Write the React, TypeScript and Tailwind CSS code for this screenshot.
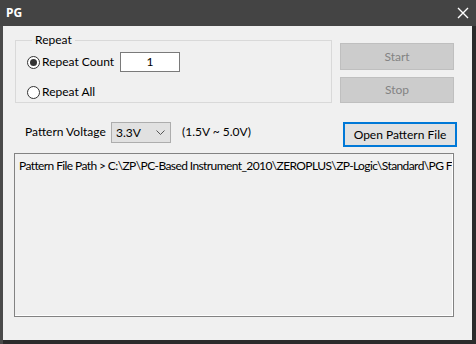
import React from "react";

const font = { fontFamily: 'Lato, "Noto Sans", sans-serif' };

function Radio({ checked, label }: { checked?: boolean; label: string }) {
  return (
    <div className="flex items-center h-[16px]">
      <div className="w-[13px] h-[13px] rounded-full border border-[#333333] bg-white flex items-center justify-center shrink-0">
        {checked && <div className="w-[7px] h-[7px] rounded-full bg-[#333333]" />}
      </div>
      <span className="ml-[2px] text-[12px] text-black leading-none whitespace-nowrap">{label}</span>
    </div>
  );
}

export default function App() {
  return (
    <div
      className="w-[476px] h-[344px] bg-[#2b2b2b] flex flex-col overflow-hidden"
      style={font}
    >
      <div className="h-[26px] bg-[#444444] flex items-center justify-between pl-[6px] pr-[7px] shrink-0">
        <span className="text-white text-[12px] font-bold" style={{ fontFamily: '"Noto Sans", sans-serif' }}>PG</span>
        <svg width="12" height="12" viewBox="0 0 12 12">
          <path d="M1 1 L11 11 M11 1 L1 11" stroke="white" strokeWidth="1.4" />
        </svg>
      </div>
      <div className="flex flex-1 min-h-0">
        <div className="w-[3px] bg-[#4a4a4a]" />
        <div className="flex-1 flex flex-col mr-[4px] mb-[4px] bg-[#f0f0f0] pl-[11px]">
          <div className="flex mt-[7px]">
            <fieldset className="ml-[1px] w-[317px] h-[70px] border border-[#d9d9d9] pl-[11px] relative">
              <legend className="ml-[5px] px-[3px] text-[12px] leading-[14px] text-black">Repeat</legend>
              <div className="flex items-center mt-[5px]">
                <div className="w-[93px]">
                  <Radio checked label="Repeat Count" />
                </div>
                <div className="w-[60px] h-[20px] border border-[#7a7a7a] bg-white flex items-center justify-center text-[12px] text-black">
                  1
                </div>
              </div>
              <div className="mt-[12px]">
                <Radio label="Repeat All" />
              </div>
            </fieldset>
            <div className="ml-[8px] flex flex-col mt-[10px] gap-[7px]">
              <div className="w-[114px] h-[27px] bg-[#cccccc] border border-[#bfbfbf] flex items-center justify-center text-[12px] text-[#838383]">
                Start
              </div>
              <div className="w-[114px] h-[26px] bg-[#cccccc] border border-[#bfbfbf] flex items-center justify-center text-[12px] text-[#838383]">
                Stop
              </div>
            </div>
          </div>
          <div className="flex items-start mt-[19px]">
            <span className="ml-[11px] w-[86px] mt-[2px] text-[12px] text-black leading-[16px] whitespace-nowrap">Pattern Voltage</span>
            <div className="w-[60px] h-[21px] bg-[#e1e1e1] border border-[#adadad] flex items-center justify-between pl-[4px] pr-[5px] text-[12px] text-black">
              <span>3.3V</span>
              <svg width="9" height="6" viewBox="0 0 9 6">
                <path d="M0.5 0.5 L4.5 4.5 L8.5 0.5" stroke="#555" fill="none" strokeWidth="1" />
              </svg>
            </div>
            <span className="ml-[11px] mt-[2px] text-[12px] text-black leading-[16px] whitespace-nowrap">(1.5V ~ 5.0V)</span>
            <div className="ml-auto mr-[15px] w-[114px] h-[25px] bg-[#e1e1e1] border-2 border-[#0078d7] flex items-center justify-center text-[12px] text-black">
              Open Pattern File
            </div>
          </div>
          <div className="mt-[6px] w-[440px] h-[164px] border border-[#828282] ">
            <div className="w-full h-full border-r border-b border-white overflow-hidden whitespace-nowrap pl-[4px] pt-[4px] text-[12px] tracking-[-0.6px] text-black leading-[16px]">
              Pattern File Path &gt; C:\ZP\PC-Based Instrument_2010\ZEROPLUS\ZP-Logic\Standard\PG File
            </div>
          </div>
        </div>
      </div>
    </div>
  );
}
